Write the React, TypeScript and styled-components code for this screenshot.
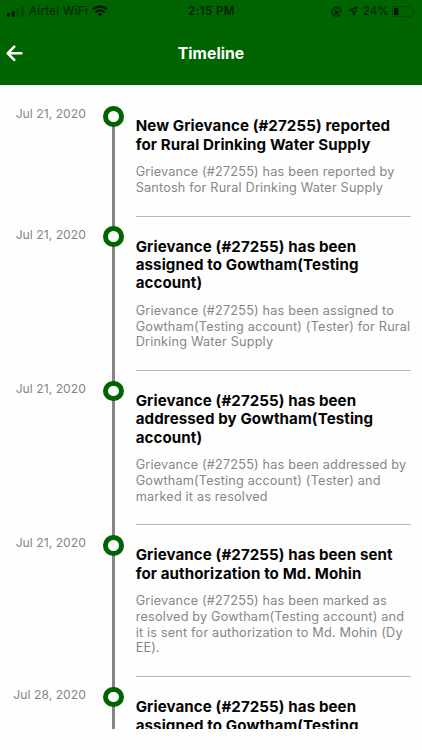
import React from "react";
import styled, { createGlobalStyle } from "styled-components";

const GlobalStyle = createGlobalStyle`
  * { box-sizing: border-box; }
  body { margin: 0; background: #fff; font-family: Inter, "Liberation Sans", sans-serif; }
`;

const Screen = styled.div`
  width: 422px;
  height: 750px;
  display: flex;
  flex-direction: column;
  overflow: hidden;
  background: #fefefe;
`;

const Header = styled.header`
  height: 85.4px;
  flex: none;
  background: #006400;
`;

const StatusBar = styled.div`
  height: 22px;
  display: grid;
  grid-template-columns: 1fr auto 1fr;
  align-items: center;
  padding: 0 6px 0 7px;
  color: #052305;
  font-size: 11.6px;
  line-height: 22px;
  letter-spacing: 0.3px;
  white-space: nowrap;
`;

const StatusGroup = styled.div<{ $end?: boolean }>`
  display: flex;
  align-items: center;
  justify-content: ${(p) => (p.$end ? "flex-end" : "flex-start")};
  svg { display: block; flex: none; }
`;

const Carrier = styled.span`
  margin: 0 4px 0 5px;
`;

const Clock = styled.span`
  font-weight: 600;
  font-size: 11.6px;
  letter-spacing: 0.38px;
`;

const Battery = styled.span`
  margin: 0 3px 0 5px;
  letter-spacing: 0.2px;
`;

const NavBar = styled.div`
  height: 63px;
  display: grid;
  grid-template-columns: 30px 1fr 30px;
  align-items: center;
`;

const BackButton = styled.button`
  display: flex;
  padding: 0 0 0 6px;
  border: 0;
  background: none;
`;

const NavTitle = styled.h1`
  margin: 0;
  text-align: center;
  color: #fff;
  font-size: 15.7px;
  font-weight: 700;
  letter-spacing: 0.05px;
`;

const Scroller = styled.main`
  height: 643.6px;
  flex: none;
  display: flex;
  flex-direction: column;
  overflow: hidden;
  padding-top: 31px;
`;

const Entry = styled.article`
  display: grid;
  flex: none;
  grid-template-columns: 86px 27px 1fr;

  &:last-child {
    flex: 1 0 0;
    min-height: 0;
  }
`;

const EntryDate = styled.time`
  margin-top: -10px;
  text-align: right;
  color: #868686;
  font-size: 12.2px;
  line-height: 16px;
  letter-spacing: 0.02px;
  white-space: nowrap;
`;

const Rail = styled.div`
  position: relative;
  justify-self: end;
  width: 3px;
  margin-right: -2.2px;
  background: #858585;
`;

const Marker = styled.span`
  position: absolute;
  left: -8.8px;
  top: -10.2px;
  width: 20.6px;
  height: 20.6px;
  border: 5.2px solid #006400;
  border-radius: 50%;
  background: #fff;
`;

const Body = styled.div`
  margin-left: 22.7px;
  width: 275.6px;
  padding-top: 1px;
  white-space: nowrap;
`;

const Title = styled.h2`
  margin: 0;
  color: #050505;
  font-size: 15.1px;
  font-weight: 700;
  line-height: 18.45px;
  letter-spacing: 0.1px;
`;

const Description = styled.p`
  margin: 9.9px 0 19.9px;
  color: #868686;
  font-size: 12.7px;
  line-height: 15.75px;
  letter-spacing: 0.18px;
`;

const Line = styled.span`
  display: block;
`;

const Divider = styled.hr`
  height: 1px;
  margin: 0 0 20px;
  border: 0;
  background: #b8b8b8;
`;

const entries = [
  {
    date: "Jul 21, 2020",
    title: ["New Grievance (#27255) reported", "for Rural Drinking Water Supply"],
    text: ["Grievance (#27255) has been reported by", "Santosh for Rural Drinking Water Supply"],
  },
  {
    date: "Jul 21, 2020",
    title: ["Grievance (#27255) has been", "assigned to Gowtham(Testing", "account)"],
    text: [
      "Grievance (#27255) has been assigned to",
      "Gowtham(Testing account) (Tester) for Rural",
      "Drinking Water Supply",
    ],
  },
  {
    date: "Jul 21, 2020",
    title: ["Grievance (#27255) has been", "addressed by Gowtham(Testing", "account)"],
    text: [
      "Grievance (#27255) has been addressed by",
      "Gowtham(Testing account) (Tester) and",
      "marked it as resolved",
    ],
  },
  {
    date: "Jul 21, 2020",
    title: ["Grievance (#27255) has been sent", "for authorization to Md. Mohin"],
    text: [
      "Grievance (#27255) has been marked as",
      "resolved by Gowtham(Testing account) and",
      "it is sent for authorization to Md. Mohin (Dy",
      "EE).",
    ],
  },
  {
    date: "Jul 28, 2020",
    title: ["Grievance (#27255) has been", "assigned to Gowtham(Testing"],
    text: [],
  },
];

const SignalIcon = () => (
  <svg width="17" height="11" viewBox="0 0 17 11">
    <rect x="0" y="7.2" width="3" height="3.6" rx=".8" fill="#031603" />
    <rect x="4.7" y="5.2" width="3" height="5.6" rx=".8" fill="#031603" />
    <rect x="9.4" y="2.8" width="3" height="8" rx=".8" fill="#044d04" />
    <rect x="14" y="0.2" width="3" height="10.6" rx=".8" fill="#044d04" />
  </svg>
);

const WifiIcon = () => (
  <svg width="16" height="12" viewBox="0 0 16 12" fill="none" stroke="#031603" strokeWidth="2.1">
    <path d="M1 4.5a10 10 0 0 1 14 0" />
    <path d="M3.6 7.2a6.3 6.3 0 0 1 8.8 0" />
    <path d="M8 11.5 5.6 9a3.4 3.4 0 0 1 4.8 0z" fill="#031603" stroke="none" />
  </svg>
);

const LockIcon = () => (
  <svg width="11" height="11" viewBox="0 0 11 11" fill="none" stroke="#052305">
    <path d="M9.2 8.4A4.6 4.6 0 1 1 10 4.6" strokeWidth="1.1" />
    <path d="m8.5 4.9 1.6 1.9 1-2.1z" fill="#052305" stroke="none" />
    <rect x="3.3" y="5" width="4" height="3" rx=".4" fill="#052305" stroke="none" />
    <path d="M4.1 5V4a1.2 1.2 0 0 1 2.4 0v1" strokeWidth=".8" />
  </svg>
);

const LocationIcon = () => (
  <svg width="10" height="10" viewBox="0 0 10 10">
    <path d="M9.2.8 5.8 9 5.2 4.9.8 4.5z" fill="none" stroke="#052305" strokeWidth="1.3" strokeLinejoin="round" />
  </svg>
);

const BatteryIcon = () => (
  <svg width="24" height="11" viewBox="0 0 24 11">
    <rect x=".5" y=".5" width="20.5" height="10" rx="2.6" fill="none" stroke="#054805" />
    <rect x="2" y="2" width="4.4" height="7" rx="1" fill="#021202" />
    <path d="M22.3 3.7c1.5.6 1.5 3 0 3.6z" fill="#054805" />
  </svg>
);

const BackIcon = () => (
  <svg width="17" height="17" viewBox="0 0 17 17" fill="none" stroke="#fff" strokeWidth="2.6" strokeLinecap="round" strokeLinejoin="round">
    <path d="M15.3 8.3H2M8.2 1.7 1.7 8.3l6.5 6.6" />
  </svg>
);

const IconGap = styled.span`
  width: 6px;
`;

export default function App() {
  return (
    <Screen>
      <GlobalStyle />
      <Header>
        <StatusBar>
          <StatusGroup>
            <SignalIcon />
            <Carrier>Airtel WiFi</Carrier>
            <WifiIcon />
          </StatusGroup>
          <Clock>2:15 PM</Clock>
          <StatusGroup $end>
            <LockIcon />
            <IconGap />
            <LocationIcon />
            <Battery>24%</Battery>
            <BatteryIcon />
          </StatusGroup>
        </StatusBar>
        <NavBar>
          <BackButton aria-label="Back">
            <BackIcon />
          </BackButton>
          <NavTitle>Timeline</NavTitle>
        </NavBar>
      </Header>
      <Scroller>
        {entries.map((entry, i) => (
          <Entry key={i}>
            <EntryDate>{entry.date}</EntryDate>
            <Rail>
              <Marker />
            </Rail>
            <Body>
              <Title>
                {entry.title.map((line) => (
                  <Line key={line}>{line}</Line>
                ))}
              </Title>
              {entry.text.length > 0 && (
                <>
                  <Description>
                    {entry.text.map((line) => (
                      <Line key={line}>{line}</Line>
                    ))}
                  </Description>
                  <Divider />
                </>
              )}
            </Body>
          </Entry>
        ))}
      </Scroller>
    </Screen>
  );
}
